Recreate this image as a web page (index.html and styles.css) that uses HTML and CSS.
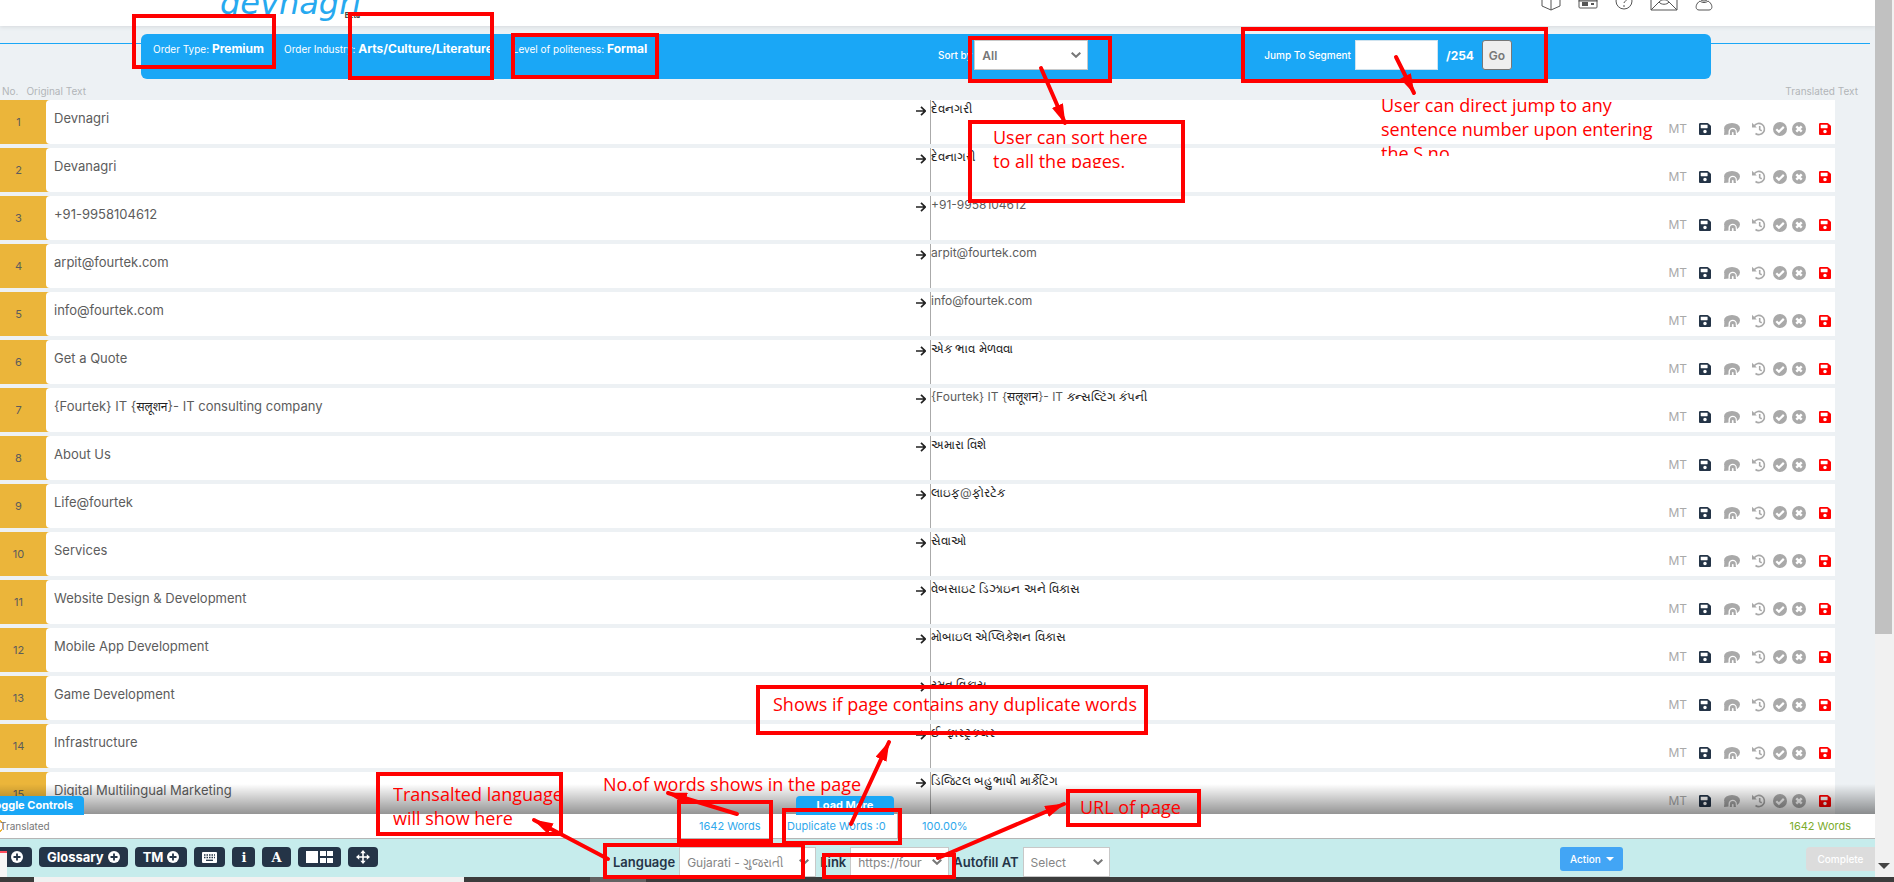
FILE: index.html
```html
<!DOCTYPE html>
<html lang="en">
<head>
<meta charset="utf-8">
<title>Devnagri – Translation editor</title>
<link rel="stylesheet" href="styles.css">
</head>
<body>
<svg class="sprite" aria-hidden="true">
  <symbol id="save" viewBox="0 0 448 512"><path fill="currentColor" d="M433.9 129.9l-83.9-83.9A48 48 0 0 0 316.1 32H48C21.5 32 0 53.5 0 80v352c0 26.5 21.5 48 48 48h352c26.5 0 48-21.5 48-48V163.9a48 48 0 0 0-14.1-34zM224 416c-35.3 0-64-28.7-64-64s28.7-64 64-64 64 28.7 64 64-28.7 64-64 64zm96-304.5V212c0 6.600-5.400 12-12 12H76c-6.600 0-12-5.400-12-12V108c0-6.600 5.400-12 12-12h228.500c3.200 0 6.200 1.300 8.500 3.500l3.500 3.500A12 12 0 0 1 320 111.500z"/></symbol>
  <symbol id="comment" viewBox="0 0 16 14"><ellipse cx="8" cy="6.500" rx="8" ry="5.500" fill="currentColor"/><path fill="currentColor" d="M.5 8L0 13l5-.5V8z"/><path fill="#fff" d="M4.500 14V10a4.200 4.200 0 0 1 8.400 0v4z"/><path fill="currentColor" d="M5.700 13c.4-1 .2-2 .2-3a2.900 2.900 0 0 1 5.800 0c0 1 0 2 .3 3H9.600v-2.500a.9.9 0 0 0-1.700 0V13z"/></symbol>
  <symbol id="history" viewBox="0 0 14 14"><path fill="none" stroke="currentColor" stroke-width="1.600" d="M2.200 3.800A5.600 5.600 0 1 1 3.500 11.500M7.700 4v3.500l2 1.300"/><path fill="currentColor" d="M0 .8V5.500h4.800z"/></symbol>
  <symbol id="check" viewBox="0 0 14 14"><circle cx="7" cy="7" r="7" fill="currentColor"/><path fill="none" stroke="#fff" stroke-width="2.200" d="M3.300 7.200l2.600 2.600 4.900-4.900"/></symbol>
  <symbol id="cross" viewBox="0 0 14 14"><circle cx="7" cy="7" r="7" fill="currentColor"/><path fill="none" stroke="#fff" stroke-width="2.400" d="M4.300 4.300l5.400 5.400M9.700 4.300L4.300 9.700"/></symbol>
  <symbol id="arrow" viewBox="0 0 10 10"><path fill="none" stroke="currentColor" stroke-width="1.700" d="M0 5h9M5 .8L9.200 5 5 9.200"/></symbol>
  <symbol id="chevron" viewBox="0 0 10 6"><path fill="none" stroke="currentColor" stroke-width="2" d="M.7.700L5 4.800 9.300.7"/></symbol>
  <symbol id="plus" viewBox="0 0 12 12"><circle cx="6" cy="6" r="6" fill="#fff"/><path stroke="#243447" stroke-width="1.800" d="M6 2.500v7M2.500 6h7"/></symbol>
</svg>

<div class="window">
  <main class="page">
    <header class="topbar">
      <a class="logo" href="#">devnagri<small>Beta</small></a>
      <nav class="topnav" aria-label="Account">
        <svg width="20" height="22" viewBox="0 0 20 22"><path d="M1 4l9-3 9 3v13l-9 4-9-4zM1 5l9 4 9-4M10 9v12"/></svg>
        <svg width="20" height="20" viewBox="0 0 20 20"><rect x="1" y="2" width="18" height="8"/><rect x="1" y="9" width="18" height="8" rx="1"/><path d="M4 12h6M4 14h6M13 13h3" stroke-width="2"/></svg>
        <svg width="18" height="22" viewBox="0 0 18 22"><circle cx="9" cy="12" r="8"/><path d="M6 10c0-4 6-4 6 0 0 2-3 2-3 4M9 16v2"/></svg>
        <svg width="28" height="22" viewBox="0 0 28 22"><path d="M1 3h26v18H1zM1 21l8-8c3-3 7-3 10 0l8 8M9 13c2 3 8 3 10 0"/></svg>
        <svg width="18" height="22" viewBox="0 0 18 22"><circle cx="9" cy="7" r="5"/><path d="M5 12c-5 3-5 9-1 9h10c4 0 4-6-1-9-2 2-6 2-8 0z"/></svg>
      </nav>
    </header>

    <section class="order">
      <div class="orderbar">
        <div class="facts">
          <span>Order Type: <b>Premium</b></span>
          <span>Order Industry: <b>Arts/Culture/Literature</b></span>
          <span>Level of politeness: <b>Formal</b></span>
        </div>
        <div class="sort">
          <label for="sort">Sort by</label>
          <span class="pick sortpick"><select id="sort"><option>All</option></select><svg><use href="#chevron"/></svg></span>
        </div>
        <form class="jump">
          <label for="segment">Jump To Segment</label>
          <input id="segment" type="text">
          <b>/254</b>
          <button type="button">Go</button>
        </form>
      </div>
    </section>

    <div class="heads"><span>No.</span><span>Original Text</span><span class="last">Translated Text</span></div>
    <ol class="segments" id="segments"></ol>
  </main>

  <footer class="dock">
    <div class="shade">
      <button class="tab toggle" type="button">Toggle Controls</button>
      <button class="tab more" type="button">Load More</button>
    </div>
    <div class="counts">
      <span class="state">Translated</span>
      <span class="count words">1642 Words</span>
      <span class="count dup">Duplicate Words :0</span>
      <span class="count">100.00%</span>
      <span class="done">1642 Words</span>
    </div>
    <div class="controls">
      <div class="peek"></div>
      <div class="tools">
        <button class="tool cut" type="button" aria-label="Add"><svg width="12" height="12"><use href="#plus"/></svg></button>
        <button class="tool" type="button">Glossary <svg width="12" height="12"><use href="#plus"/></svg></button>
        <button class="tool" type="button">TM <svg width="12" height="12"><use href="#plus"/></svg></button>
        <button class="tool" type="button" aria-label="Keyboard"><svg width="15" height="11" viewBox="0 0 15 11"><rect width="15" height="11" rx="1" fill="#fff"/><path stroke="#243447" stroke-width="1.300" stroke-dasharray="1.500 1" d="M2 3h11M2 5.500h11"/><path stroke="#243447" stroke-width="1.300" d="M4 8.300h7"/></svg></button>
        <button class="tool serif" type="button">i</button>
        <button class="tool serif" type="button">A</button>
        <button class="tool" type="button" aria-label="Layout"><svg width="27" height="12" viewBox="0 0 27 12"><path fill="#fff" d="M0 0h12v12H0zM14 0h6v5h-6zM21 0h6v5h-6zM14 7h6v5h-6zM21 7h6v5h-6z"/></svg></button>
        <button class="tool" type="button" aria-label="Move"><svg width="14" height="14" viewBox="0 0 14 14"><path stroke="#fff" stroke-width="1.600" d="M7 2v10M2 7h10"/><path fill="#fff" d="M7 0l2.700 3.200H4.300zM7 14l2.700-3.200H4.300zM0 7l3.200-2.700v5.400zM14 7l-3.200-2.700v5.400z"/></svg></button>
      </div>
      <div class="filters">
        <label for="lang">Language</label>
        <span class="pick langpick"><select id="lang"><option>Gujarati - ગુજરાતી</option></select><svg><use href="#chevron"/></svg></span>
        <label for="link">Link</label>
        <span class="pick linkpick"><select id="link"><option>https://fourtek.com</option></select><svg><use href="#chevron"/></svg></span>
        <label for="auto">Autofill AT</label>
        <span class="pick autopick"><select id="auto"><option>Select</option></select><svg><use href="#chevron"/></svg></span>
      </div>
      <button class="action" type="button">Action <i class="caret"></i></button>
      <button class="complete" type="button" disabled>Complete</button>
    </div>
  </footer>
  <div class="scroll"><div class="thumb"></div><div class="track"><i class="caret"></i></div></div>
  <div class="taskbar"><div class="search"></div><div class="app"></div></div>
</div>

<div class="notes">
  <svg class="marks" width="1894" height="882" aria-hidden="true">
    <defs><marker id="head" viewBox="0 0 20 12" refX="19" refY="6" markerWidth="20" markerHeight="12" markerUnits="userSpaceOnUse" orient="auto"><path fill="#f00" d="M0 0l20 6-20 6z"/></marker></defs>
    <g fill="none" stroke="#f00" stroke-width="4">
      <rect x="134" y="16" width="140" height="51"/>
      <rect x="350" y="14" width="142" height="64"/>
      <rect x="513" y="35" width="144" height="42"/>
      <rect x="970" y="38" width="140" height="43"/>
      <rect x="970" y="122" width="213" height="79"/>
      <rect x="1243" y="29" width="303" height="52"/>
      <rect x="378" y="774" width="183" height="60"/>
      <rect x="605" y="845" width="198" height="32"/>
      <rect x="679" y="802" width="92" height="39"/>
      <rect x="784" y="810" width="116" height="33"/>
      <rect x="824" y="855" width="130" height="22"/>
      <rect x="758" y="687" width="388" height="46"/>
      <rect x="1068" y="791" width="131" height="34"/>
      <g stroke-linecap="round">
        <path d="M1041 68L1065 123" class="shaft"/>
        <path d="M1396 57L1414 93" class="shaft"/>
        <path d="M737 814L668 793" class="shaft"/>
        <path d="M851 824L889 742" class="shaft"/>
        <path d="M938 858L1064 804" class="shaft"/>
        <path d="M608 859L534 820" class="shaft"/>
      </g>
    </g>
  </svg>
  <p class="note n-sort">User can sort here<br>to all the pages.</p>
  <p class="note n-jump">User can direct jump to any<br>sentence number upon entering<br>the S.no</p>
  <p class="note n-dup">Shows if page contains any duplicate words</p>
  <p class="note n-lang">Transalted language<br>will show here</p>
  <p class="note n-words">No.of words shows in the page</p>
  <p class="note n-url">URL of page</p>
</div>
<script src="app.js"></script>
</body>
</html>
```
FILE: styles.css
```css
* { box-sizing: border-box; }
body {
  margin: 0;
  overflow: hidden;
  font-family: Inter, "Noto Sans", "Open Sans", sans-serif;
  font-size: 12px;
  color: #5c5c5c;
  background: #edf1f4;
}
button, input, select { font: inherit; margin: 0; }
.sprite { position: absolute; width: 0; height: 0; }

.window {
  display: grid;
  grid-template: minmax(0, 1fr) auto 5px / minmax(0, 1fr) 19px;
  height: 100vh;
}
.page { grid-area: 1 / 1; overflow: hidden; }
.dock { grid-area: 2 / 1; position: relative; }
.scroll { grid-area: 1 / 2 / 3 / 3; display: flex; flex-direction: column; background: #f1f1f1; }
.taskbar { grid-area: 3 / 1 / 4 / 3; }

.topbar {
  display: flex;
  justify-content: space-between;
  height: 26px;
  padding: 0 162px 0 220px;
  background: #fff;
  box-shadow: 0 1px 4px #d5d9dc;
}
.logo {
  position: relative;
  display: flex;
  align-items: flex-end;
  height: 20px;
  color: #27a9ef;
  font-family: "DejaVu Sans", sans-serif;
  font-style: italic;
  font-size: 32px;
  line-height: 34px;
  text-decoration: none;
}
.logo small { position: absolute; right: 1px; top: 12px; color: #333; font: bold 7px/8px Inter, sans-serif; }
.topnav { display: flex; align-items: flex-end; gap: 17px; height: 11px; }
.topnav svg { flex: none; fill: none; stroke: #555; stroke-width: 1; }

.order {
  padding: 8px 164px 0 141px;
  background: linear-gradient(#1aa7f6, #1aa7f6) 0 17px / calc(100% - 5px) 1px no-repeat;
}
.orderbar {
  display: flex;
  height: 45px;
  padding: 6px 199px 0 12px;
  border-radius: 6px;
  background: #1aa7f6;
  color: #fff;
  font-size: 10px;
}
.facts { display: flex; gap: 20px; width: 785px; line-height: 18px; white-space: nowrap; }
.facts b { font-size: 12px; }
.sort, .jump { display: flex; align-items: center; height: 30px; }
.sort { gap: 2px; flex: 1; font-weight: 500; }
.jump { gap: 4px; font-weight: 500; }
.jump input { width: 83px; height: 30px; border: 1px solid #cfe3ef; background: #fff; }
.jump b { margin: 0 4px; font-size: 12px; }
.jump button {
  width: 30px; height: 30px; padding: 0;
  border: 1px solid #777; border-radius: 3px;
  background: #efefef; color: #777; font-size: 12px; font-weight: 600;
}

.pick { position: relative; display: flex; }
.pick select {
  appearance: none;
  width: 100%; height: 30px;
  padding: 0 26px 0 7px;
  border: 1px solid #c8c8c8; border-radius: 0;
  background: #fff; color: #858585; font-size: 12px;
}
.pick svg { position: absolute; right: 7px; top: 12px; width: 10px; height: 6px; color: #777; pointer-events: none; }
.sortpick { width: 114px; }
.sortpick select { font-weight: 600; color: #777; }

.heads {
  display: flex;
  gap: 8px;
  padding: 4px 17px 0 2px;
  color: #b2b5b8;
  font-size: 10px;
  line-height: 17px;
}
.heads .last { margin-left: auto; }

.segments { display: grid; gap: 4px; margin: 0; padding: 0 40px 0 0; list-style: none; }
.segment {
  display: grid;
  grid-template-columns: 46px minmax(0, 1fr) 14px minmax(0, 905px);
  height: 44px;
  background: #ebb53a;
}
.num { padding: 13px 9px 0 0; text-align: center; line-height: 18px; font-size: 11px; }
.src { padding: 9px 8px 0; border-radius: 4px 0 0 4px; background: #fff; font-size: 13px; line-height: 18px; }
.src .indic { font-size: 12px; }
.go { padding: 6px 0 0; background: #fff; color: #222; }
.go svg { display: block; width: 10px; height: 10px; }
.dst {
  display: flex;
  justify-content: space-between;
  padding: 0 4px 0 0;
  border-left: 1px solid #aaa;
  background: #fff;
  line-height: 18px;
}
.indic { color: #222; }
.acts { display: flex; align-items: center; margin-top: 20px; height: 18px; color: #a9a9a9; }
.acts span { margin-right: 12px; }
.acts button { display: flex; padding: 0; border: 0; background: none; color: inherit; }
.acts svg { display: block; width: 14px; height: 14px; }
.acts .save { color: #243447; margin-right: 13px; }
.acts .save svg { width: 12px; }
.acts .talk { margin-right: 12px; }
.acts .talk svg { width: 16px; }
.acts .hist { margin-right: 7px; }
.acts .ok { margin-right: 5px; }
.acts .no { margin-right: 13px; }
.acts .red { color: #f00; margin-right: 0; }

.shade {
  position: absolute;
  left: 0; right: 0; bottom: 100%;
  height: 30px;
  background: linear-gradient(transparent, rgba(0, 0, 0, .42));
}
.tab {
  position: absolute;
  bottom: -1px;
  height: 19px;
  padding: 0 11px;
  border: 0;
  border-radius: 4px 4px 0 0;
  background: #1aa7f6;
  color: #fff;
  font-size: 11px;
  font-weight: 700;
  line-height: 17px;
  white-space: nowrap;
}
.toggle { left: -23px; }
.more { left: 796px; width: 98px; }
.counts {
  display: flex;
  align-items: center;
  height: 25px;
  padding-right: 24px;
  border-bottom: 1px solid #b5b5b5;
  background: radial-gradient(circle at -5px 12px, transparent 7px, #ebb53a 7px, #ebb53a 8px, transparent 8px) #fff;
  font-size: 11px;
}
.state { width: 699px; font-size: 10px; color: #777; }
.count { color: #2fa8ec; }
.words { width: 88px; }
.dup { width: 111px; margin-right: 24px; border-right: 1px solid #bbb; line-height: 24px; white-space: nowrap; }
.done { margin-left: auto; color: #7cab2c; }

.controls {
  position: relative;
  display: flex;
  align-items: flex-start;
  height: 38px;
  padding-top: 8px;
  background: #c6ecec;
  overflow: hidden;
}
.peek { position: absolute; left: 0; top: 12px; width: 7px; height: 26px; border-top: 2px solid #ff4d5e; background: #f6f6f6; }
.tools { display: flex; gap: 7px; width: 613px; }
.tool {
  display: flex;
  align-items: center;
  gap: 4px;
  height: 20px;
  padding: 0 8px;
  border: 0;
  border-radius: 4px;
  background: #243447;
  color: #fff;
  font-size: 13px;
  font-weight: 700;
}
.tool.cut { width: 32px; padding-left: 11px; border-radius: 0 4px 4px 0; }
.tool.serif { padding: 0 9px; font-family: "DejaVu Serif", serif; font-size: 13px; }
.filters { display: flex; align-items: center; gap: 4px; flex: 1; color: #243447; font-size: 13px; font-weight: 600; white-space: nowrap; }
.filters select { font-weight: 400; }
.langpick { width: 137px; }
.linkpick { width: 99px; }
.autopick { width: 87px; }
.action, .complete { height: 24px; border: 0; color: #fff; font-size: 10px; font-weight: 500; }
.action { display: flex; align-items: center; gap: 5px; width: 63px; padding: 0 10px; border-radius: 3px; background: #42a5f5; }
.complete { width: 69px; margin-left: 183px; padding: 0 8px; border-radius: 4px 0 0 4px; background: #dcdcdc; }
.caret { border: 4px solid transparent; border-top-color: currentColor; border-bottom: 0; }
.scroll .caret { border-width: 6px 6px 0; }

.thumb { height: 634px; max-height: 73%; margin-right: 2px; background: #c1c1c1; }
.track { flex: 1; display: flex; align-items: flex-end; padding: 0 0 8px 3px; color: #444; }
.taskbar { display: flex; background: #3c3c3c; }
.search { width: 430px; margin-left: 34px; background: #f1f1f1; }
.app { width: 56px; margin-left: 126px; background: #636363; }

.notes { position: absolute; inset: 0; overflow: hidden; pointer-events: none; }
.marks { position: absolute; left: 0; top: 0; }
.shaft { marker-end: url(#head); }
.note {
  position: absolute;
  margin: 0;
  overflow: hidden;
  color: #f00;
  font-family: "Open Sans", sans-serif;
  font-size: 18px;
  line-height: 24px;
  white-space: nowrap;
}
.n-sort { left: 993px; top: 125px; height: 43px; }
.n-jump { left: 1381px; top: 93px; height: 63px; }
.n-dup { left: 773px; top: 692px; }
.n-lang { left: 393px; top: 782px; }
.n-words { left: 603px; top: 772px; }
.n-url { left: 1080px; top: 795px; }
```
FILE: app.js
```javascript
const segments = [
  ["Devnagri", "દેવનગરી"],
  ["Devanagri", "દેવનાગરી"],
  ["+91-9958104612", "+91-9958104612"],
  ["arpit@fourtek.com", "arpit@fourtek.com"],
  ["info@fourtek.com", "info@fourtek.com"],
  ["Get a Quote", "એક ભાવ મેળવવા"],
  ["{Fourtek} IT {सलूशन}- IT consulting company", "{Fourtek} IT {सलूशन}- IT કન્સલ્ટિંગ કંપની"],
  ["About Us", "અમારા વિશે"],
  ["Life@fourtek", "લાઇફ@ફોરટેક"],
  ["Services", "સેવાઓ"],
  ["Website Design & Development", "વેબસાઇટ ડિઝાઇન અને વિકાસ"],
  ["Mobile App Development", "મોબાઇલ એપ્લિકેશન વિકાસ"],
  ["Game Development", "રમત વિકાસ"],
  ["Infrastructure", "ઈન્ફ્રાસ્ટ્રક્ચર"],
  ["Digital Multilingual Marketing", "ડિજિટલ બહુભાષી માર્કેટિંગ"]
];

const actions = [
  ["save", "save", "Save"],
  ["talk", "comment", "Comment"],
  ["hist", "history", "History"],
  ["ok", "check", "Approve"],
  ["no", "cross", "Reject"],
  ["save red", "save", "Save final"]
];

const mark = text => text
  .replace(/&/g, "&amp;")
  .replace(/[\u0900-\u0aff]+/g, '<span class="indic">$&</span>');

const buttons = actions
  .map(([cls, icon, label]) => `<button type="button" class="${cls}" aria-label="${label}"><svg><use href="#${icon}"/></svg></button>`)
  .join("");

document.getElementById("segments").innerHTML = segments
  .map(([source, target], i) => `<li class="segment">
    <div class="num">${i + 1}</div>
    <div class="src">${mark(source)}</div>
    <div class="go"><svg><use href="#arrow"/></svg></div>
    <div class="dst"><div>${mark(target)}</div><div class="acts"><span>MT</span>${buttons}</div></div>
  </li>`)
  .join("");
```
